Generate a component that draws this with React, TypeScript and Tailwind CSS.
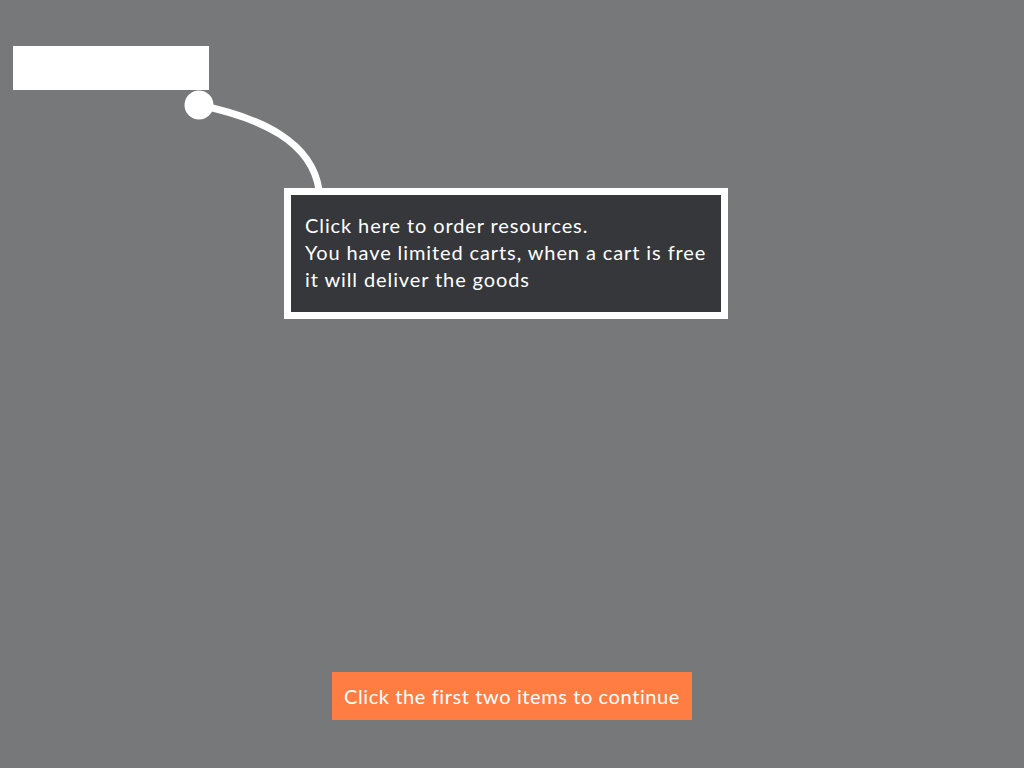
export default function App() {
  return (
    <div className="relative w-screen h-screen overflow-hidden bg-[#77787a] font-['Lato','Liberation_Sans',sans-serif] text-white">
      {/* Highlighted target */}
      <div className="absolute left-[13px] top-[46px] w-[196px] h-[44px] bg-white" />

      {/* Connector */}
      <svg className="absolute left-0 top-0" width="400" height="200" viewBox="0 0 400 200">
        <path d="M199 105 C 262 118, 312 142, 319 190" fill="none" stroke="#fff" strokeWidth="7" />
        <circle cx="199" cy="105" r="14.5" fill="#fff" />
      </svg>

      {/* Tooltip */}
      <div className="absolute left-[284px] top-[188px] w-[444px] h-[131px] border-[7px] border-white bg-[#36373b] px-[14px] pt-[17px]">
        <p className="text-[20px] leading-[27px] tracking-[0.9px] whitespace-nowrap">
          Click here to order resources.
          <br />
          You have limited carts, when a cart is free
          <br />
          it will deliver the goods
        </p>
      </div>

      {/* Continue */}
      <div className="absolute inset-x-0 bottom-[48px] flex justify-center">
        <button className="w-[360px] h-[48px] bg-[#ff7c43] text-[20px] tracking-[0.6px] text-white whitespace-nowrap">
          Click the first two items to continue
        </button>
      </div>
    </div>
  )
}
